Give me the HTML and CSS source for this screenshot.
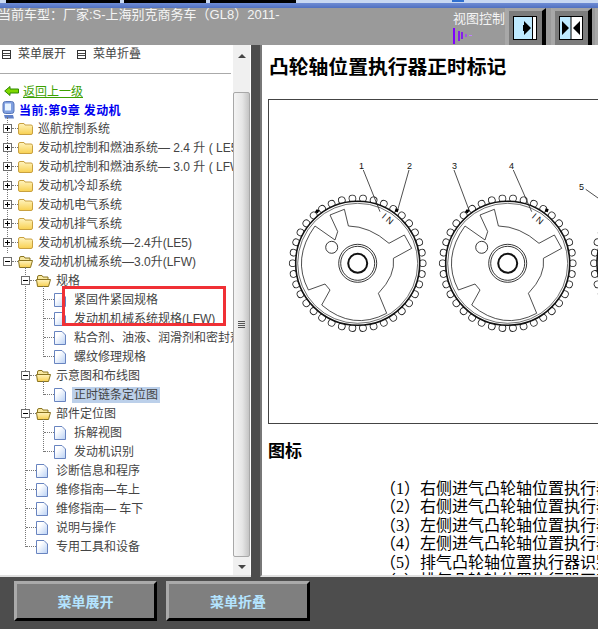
FILE: index.html
```html
<!DOCTYPE html>
<html lang="zh">
<head>
    <meta charset="UTF-8" />
    <title>凸轮轴位置执行器正时标记</title>
    <link rel="stylesheet" href="styles.css">
</head>
<body>
    <svg class="sprite" width="0" height="0">
        <defs>
            <linearGradient id="folderfill" x1="0" y1="0" x2="0" y2="1">
                <stop offset="0" stop-color="#fff4c0" />
                <stop offset="1" stop-color="#f8d050" />
            </linearGradient>
            <linearGradient id="docfill" x1="0" y1="0" x2="1" y2="1">
                <stop offset="0.3" stop-color="#fff" />
                <stop offset="1" stop-color="#b8d0f4" />
            </linearGradient>
            <symbol id="folder" viewBox="0 0 15 13">
                <path d="M.5 3Q.5 1.5 2 1.5H6L7 3H13Q14.5 3 14.5 4.5V11Q14.5 12.5 13 12.5H2Q.5 12.5 .5 11Z" fill="url(#folderfill)" stroke="#c8a040" />
            </symbol>
            <symbol id="folderopen" viewBox="0 0 15 13">
                <path d="M1.5 11V3Q1.5 1.5 3 1.5H6L7 3H12V5" fill="#f8e8a0" stroke="#8a7420" />
                <path d="M1.5 12.5L.5 5.5H14.5L12.5 12.5Z" fill="url(#folderfill)" stroke="#8a7420" />
            </symbol>
            <symbol id="doc" viewBox="0 0 12 14">
                <path d="M.5 .5H8L11.5 4V13.5H.5Z" fill="url(#docfill)" stroke="#6884c0" />
            </symbol>
            <g id="gear">
                <circle r="65" fill="none" stroke="#222" stroke-width="7.6" stroke-linecap="round" pathLength="38" stroke-dasharray="0.001 0.999" />
                <circle r="65" fill="none" stroke="#fff" stroke-width="6" stroke-linecap="round" pathLength="38" stroke-dasharray="0.001 0.999" />
                <circle r="62" fill="#fff" stroke="#111" stroke-width="1.6" />
                <circle r="60" fill="none" stroke="#333" stroke-width=".7" />
                <path d="M-27.7-48.3L-13.3-54-9.3-37.3Q12-37 31.3-20L46.7-28.3 54-15 35.7-5Q38 12 20.7 30L29 50Q-5 68-36 41.7L-27.7 26.7-32.7 20.7-49.3 26.7Q-66-5-42.7-37.3L-22.7-23.3-20-31.7Z" fill="none" stroke="#222" stroke-width=".8" />
                <circle cx="-26" cy="-16" r="6" fill="#fff" stroke="#222" stroke-width=".9" />
                <circle r="19" fill="none" stroke="#222" stroke-width=".9" />
                <circle r="17" fill="none" stroke="#222" stroke-width=".9" />
                <circle r="9.5" fill="none" stroke="#111" stroke-width="2" />
                <path d="M-41-54l3 1-2 3-3-1zM38-55l3 1-1 3-3-1z" fill="#000" />
                <text class="figtext" transform="translate(28 -42) rotate(40)" text-anchor="middle">I N</text>
            </g>
        </defs>
    </svg>

    <div class="topline">
        <div class="taskbtn"></div>
        <div class="taskbtn second"></div>
        <div class="taskbtn third"></div>
        <div class="taskmark"></div>
    </div>

    <header class="topbar">
        <div class="car">当前车型：厂家:S-上海别克商务车（GL8）2011-</div>
        <div class="viewctl">
            <div class="viewlabel">
                <span>视图控制</span>
                <svg class="bars" width="20" height="16" viewBox="0 0 20 16">
                    <path d="M1 0v16" stroke="#8000ff" stroke-width="2" />
                    <path d="M6 3v10M9 4v7" stroke="#8000ff" stroke-width="1.6" />
                    <path d="M13 6v3" stroke="#a040ff" stroke-width="1.5" />
                    <path d="M16 7.5h3" stroke="#c080ff" stroke-width="1" />
                </svg>
            </div>
            <div class="viewbtn">
                <svg class="viewicon" width="24" height="24" viewBox="0 0 24 24">
                    <rect width="24" height="24" fill="#bfeaff" />
                    <rect x="20" y="1" width="3" height="22" fill="#fff" />
                    <rect x=".5" y=".5" width="23" height="23" fill="none" stroke="#000" />
                    <path d="M19.5 0v24" stroke="#000" />
                    <path d="M11 5l7 7-7 7zM10 9h2v6h-2z" fill="#000" />
                </svg>
            </div>
            <div class="viewbtn">
                <svg class="viewicon" width="24" height="24" viewBox="0 0 24 24">
                    <rect width="12" height="24" fill="#bfeaff" />
                    <rect x="12" width="12" height="24" fill="#fff" />
                    <rect x=".5" y=".5" width="23" height="23" fill="none" stroke="#000" />
                    <path d="M12 0v24" stroke="#000" />
                    <path d="M3 5l7 7-7 7zM21 5l-7 7 7 7z" fill="#000" />
                </svg>
            </div>
            <div class="viewbtn cut"></div>
        </div>
    </header>

    <main class="panels">
        <aside class="side">
            <div class="sidescroll">
                <div class="menubar">
                    <span class="menuitem"><i class="menuicon"></i>菜单展开</span>
                    <span class="menuitem"><i class="menuicon"></i>菜单折叠</span>
                </div>
                <a class="back">
                    <svg width="15" height="10" viewBox="0 0 15 10"><path d="M.7 5L6 .5V3H14.5V7H6V9.5Z" fill="#80d800" stroke="#2f8a00" /></svg>
                    <span>返回上一级</span>
                </a>
                <div class="current">
                    <svg width="13" height="18" viewBox="0 0 13 18">
                        <rect x="1" y=".5" width="11" height="12" rx="2.5" fill="#7f9fe0" stroke="#5a78b8" />
                        <rect x="3" y="2.5" width="6" height="7" fill="#e8f4ff" />
                        <path d="M2 14h9l1 3.5H3z" fill="#5f7fc8" />
                    </svg>
                    <b>当前:第9章 发动机</b>
                </div>

                <ul class="tree">
                    <li class="row r0"><i class="exp plus"></i><i class="dash"></i><svg class="ficon"><use href="#folder" /></svg><span class="label">巡航控制系统</span></li>
                    <li class="row r0"><i class="exp plus"></i><i class="dash"></i><svg class="ficon"><use href="#folder" /></svg><span class="label">发动机控制和燃油系统— 2.4 升 ( LE5 )</span></li>
                    <li class="row r0"><i class="exp plus"></i><i class="dash"></i><svg class="ficon"><use href="#folder" /></svg><span class="label">发动机控制和燃油系统— 3.0 升 ( LFW )</span></li>
                    <li class="row r0"><i class="exp plus"></i><i class="dash"></i><svg class="ficon"><use href="#folder" /></svg><span class="label">发动机冷却系统</span></li>
                    <li class="row r0"><i class="exp plus"></i><i class="dash"></i><svg class="ficon"><use href="#folder" /></svg><span class="label">发动机电气系统</span></li>
                    <li class="row r0"><i class="exp plus"></i><i class="dash"></i><svg class="ficon"><use href="#folder" /></svg><span class="label">发动机排气系统</span></li>
                    <li class="row r0"><i class="exp plus"></i><i class="dash"></i><svg class="ficon"><use href="#folder" /></svg><span class="label">发动机机械系统—2.4升(LE5)</span></li>
                    <li class="row r0"><i class="exp"></i><i class="dash"></i><svg class="ficon"><use href="#folderopen" /></svg><span class="label">发动机机械系统—3.0升(LFW)</span></li>
                </ul>
                <ul class="sub lvl1">
                    <li class="row r1"><i class="exp"></i><i class="dash"></i><svg class="ficon"><use href="#folderopen" /></svg><span class="label">规格</span></li>
                    <li>
                        <ul class="sub lvl2">
                            <li class="row d2"><i class="dash"></i><svg class="dicon"><use href="#doc" /></svg><span class="label">紧固件紧固规格</span></li>
                            <li class="row d2"><i class="dash"></i><svg class="dicon"><use href="#doc" /></svg><span class="label">发动机机械系统规格(LFW)</span></li>
                            <li class="row d2"><i class="dash"></i><svg class="dicon"><use href="#doc" /></svg><span class="label">粘合剂、油液、润滑剂和密封剂</span></li>
                            <li class="row d2"><i class="dash"></i><svg class="dicon"><use href="#doc" /></svg><span class="label">螺纹修理规格</span></li>
                        </ul>
                    </li>
                    <li class="row r1"><i class="exp"></i><i class="dash"></i><svg class="ficon"><use href="#folderopen" /></svg><span class="label">示意图和布线图</span></li>
                    <li>
                        <ul class="sub lvl2">
                            <li class="row d2"><i class="dash"></i><svg class="dicon"><use href="#doc" /></svg><span class="label sel">正时链条定位图</span></li>
                        </ul>
                    </li>
                    <li class="row r1"><i class="exp"></i><i class="dash"></i><svg class="ficon"><use href="#folderopen" /></svg><span class="label">部件定位图</span></li>
                    <li>
                        <ul class="sub lvl2">
                            <li class="row d2"><i class="dash"></i><svg class="dicon"><use href="#doc" /></svg><span class="label">拆解视图</span></li>
                            <li class="row d2"><i class="dash"></i><svg class="dicon"><use href="#doc" /></svg><span class="label">发动机识别</span></li>
                        </ul>
                    </li>
                    <li class="row d1"><i class="dash"></i><svg class="dicon"><use href="#doc" /></svg><span class="label">诊断信息和程序</span></li>
                    <li class="row d1"><i class="dash"></i><svg class="dicon"><use href="#doc" /></svg><span class="label">维修指南—车上</span></li>
                    <li class="row d1"><i class="dash"></i><svg class="dicon"><use href="#doc" /></svg><span class="label">维修指南— 车下</span></li>
                    <li class="row d1"><i class="dash"></i><svg class="dicon"><use href="#doc" /></svg><span class="label">说明与操作</span></li>
                    <li class="row d1"><i class="dash"></i><svg class="dicon"><use href="#doc" /></svg><span class="label">专用工具和设备</span></li>
                </ul>
                <div class="redbox"></div>
            </div>
            <div class="scrollbar">
                <div class="arrow"><span class="up"></span></div>
                <div class="track">
                    <div class="thumb"><div class="grip"></div></div>
                </div>
                <div class="arrow"><span class="down"></span></div>
            </div>
        </aside>

        <section class="content">
            <h1>凸轮轴位置执行器正时标记</h1>
            <div class="figure">
                <svg width="400" height="323" viewBox="0 0 400 323">
                    <use href="#gear" transform="translate(88.7 163.3)" />
                    <use href="#gear" transform="translate(238.7 163.3)" />
                    <use href="#gear" transform="translate(390 163.3)" />
                    <g fill="none" stroke="#222" stroke-width=".8">
                        <path d="M94.3 70L111 111.7" />
                        <path d="M140 70L128.7 110" />
                        <path d="M185 70L200 110" />
                        <path d="M244.3 70L262.7 111.7" />
                        <path d="M316.7 89.3L329 98" />
                    </g>
                    <text class="figtext" x="90" y="69">1</text>
                    <text class="figtext" x="138" y="69">2</text>
                    <text class="figtext" x="183" y="69">3</text>
                    <text class="figtext" x="240" y="69">4</text>
                    <text class="figtext" x="310" y="90">5</text>
                </svg>
            </div>
            <h2>图标</h2>
            <ol class="legend">
                <li>（1）右侧进气凸轮轴位置执行器识别标记</li>
                <li>（2）右侧进气凸轮轴位置执行器正时标记</li>
                <li>（3）左侧进气凸轮轴位置执行器识别标记</li>
                <li>（4）左侧进气凸轮轴位置执行器正时标记</li>
                <li>（5）排气凸轮轴位置执行器识别标记</li>
                <li>（6）排气凸轮轴位置执行器正时标记</li>
            </ol>
        </section>
    </main>

    <footer class="bottom">
        <button class="bigbtn">菜单展开</button>
        <button class="bigbtn wide">菜单折叠</button>
    </footer>
</body>
</html>
```

FILE: styles.css
```css
html, body {
    margin: 0;
    height: 100%;
    overflow: hidden;
}

body {
    width: 598px;
    height: 631px;
    padding-bottom: 2px;
    box-sizing: border-box;
    background-color: #fff;
    font-family: "Liberation Sans", "Noto Sans CJK SC", sans-serif;
    font-size: 12px;
    color: #333;
    display: flex;
    flex-direction: column;
}

.sprite {
    position: absolute;
}

/* window strip */
.topline {
    height: 8px;
    flex: none;
    display: flex;
    background: linear-gradient(#c8d8f2 0 3px, #6e8cd4 3px, #5070c0 8px);
    position: relative;
}

.taskbtn {
    width: 114px;
    height: 3px;
    margin-left: 6px;
    background-color: #000;
}

.taskbtn.second {
    width: 82px;
    margin-left: 4px;
}

.taskbtn.third {
    width: 86px;
    margin-left: 4px;
}

.taskmark {
    position: absolute;
    left: 452px;
    top: 0;
    width: 12px;
    height: 2px;
    background-color: #2f6fd0;
}

/* top bar */
.topbar {
    height: 37px;
    flex: none;
    background-color: #9a9a9a;
    display: flex;
    justify-content: space-between;
    color: #f4f4f4;
}

.car {
    font-size: 13px;
    line-height: 14px;
    white-space: nowrap;
    margin-left: -2px;
}

.viewctl {
    width: 145px;
    flex: none;
    display: flex;
}

.viewlabel {
    width: 52px;
    flex: none;
    padding-top: 3px;
    font-size: 13px;
    line-height: 16px;
    white-space: nowrap;
}

.bars {
    display: block;
    margin-top: 1px;
}

.viewbtn {
    width: 41px;
    height: 37px;
    flex: none;
    padding-top: 5px;
    padding-left: 4px;
    box-sizing: border-box;
    margin-right: 5px;
    background-color: #7c7c7c;
    border-style: solid;
    border-width: 3px 4px 0 4px;
    border-color: #a4a4a4 #000 #000 #a8a8a8;
}

.viewbtn.cut {
    width: 3px;
    margin-left: -2px;
    margin-right: 0;
    padding: 0;
    border-width: 3px 0 0 3px;
}

.viewicon {
    display: block;
}

/* main panels */
.panels {
    flex: 1;
    min-height: 0;
    display: flex;
    background-color: #4d4d4d;
}

.side {
    width: 251px;
    flex: none;
    display: flex;
    background-color: #fff;
    border-bottom: 2px solid #e0e0e0;
}

.sidescroll {
    width: 233px;
    flex: none;
    position: relative;
    overflow: hidden;
}

.menubar {
    height: 29px;
    margin-right: 2px;
    border-bottom: 1px solid #aaa;
    display: flex;
    align-items: flex-start;
    gap: 11px;
    padding-left: 2px;
    box-sizing: border-box;
    white-space: nowrap;
}

.menuitem {
    display: flex;
    align-items: center;
    height: 14px;
    color: #444;
}

.menuicon {
    width: 7px;
    height: 5px;
    margin-top: 5px;
    margin-right: 7px;
    padding: 1px 0;
    border: 1px solid #333;
    background: repeating-linear-gradient(#444 0 1px, #fff 1px 2px);
    background-clip: content-box;
}

.back {
    display: flex;
    align-items: center;
    gap: 4px;
    height: 19px;
    margin-top: 7px;
    padding-left: 4px;
    color: #3ca000;
    text-decoration: underline;
}

.current {
    display: flex;
    align-items: center;
    height: 19px;
    padding-left: 2px;
    gap: 4px;
    color: #0000f0;
    white-space: nowrap;
    letter-spacing: .4px;
}

/* tree */
.tree, .sub {
    list-style: none;
    margin: 0;
    padding: 0;
    position: relative;
}

.tree::before, .sub::before {
    content: "";
    position: absolute;
    border-left: 1px dotted #777;
}

.tree::before {
    left: 7px;
    top: -2px;
    height: 136px;
}

.sub::before {
    top: -4px;
    bottom: 9px;
}

.lvl1::before {
    left: 25px;
}

.lvl2::before {
    left: 43px;
}

.row {
    height: 19px;
    display: flex;
    align-items: center;
    white-space: nowrap;
    color: #444;
}

.r0 {
    padding-left: 3px;
}

.r1 {
    padding-left: 21px;
}

.d1 {
    padding-left: 26px;
}

.d2 {
    padding-left: 44px;
}

.exp {
    width: 7px;
    height: 7px;
    flex: none;
    border: 1px solid #6e6e6e;
    background: linear-gradient(#000, #000) center / 5px 1px no-repeat #fff;
    position: relative;
    z-index: 1;
}

.exp.plus {
    background: linear-gradient(#000, #000) center / 5px 1px no-repeat, linear-gradient(#000, #000) center / 1px 5px no-repeat, #fff;
}

.dash {
    width: 6px;
    flex: none;
    border-top: 1px dotted #777;
}

.d1 .dash, .d2 .dash {
    width: 10px;
}

.ficon {
    width: 15px;
    height: 13px;
    flex: none;
    margin-right: 3px;
}

.dicon {
    width: 12px;
    height: 14px;
    flex: none;
    margin-right: 6px;
}

.label {
    line-height: 16px;
    padding: 0 2px;
}

.sel {
    background-color: #bcd0ea;
}

.redbox {
    position: absolute;
    left: 62px;
    top: 241px;
    width: 164px;
    height: 40px;
    box-sizing: border-box;
    border: 3px solid #f03035;
}

/* scrollbar */
.scrollbar {
    width: 17px;
    flex: none;
    background-color: #f0f0f0;
    display: flex;
    flex-direction: column;
}

.arrow {
    height: 17px;
    flex: none;
    position: relative;
}

.arrow span {
    position: absolute;
    left: 5px;
    width: 0;
    height: 0;
    border: 4px solid transparent;
}

.arrow .up {
    top: 5px;
    border-bottom-color: #444;
}

.arrow .down {
    top: 7px;
    border-top-color: #444;
}

.track {
    flex: 1;
    min-height: 0;
    padding-top: 30px;
    padding-bottom: 1px;
    display: flex;
}

.thumb {
    flex: 1;
    border: 1px solid #a8a8a8;
    border-radius: 2px;
    background: linear-gradient(to right, #f4f4f4, #e6e6e6 55%, #c4c4c4);
    display: flex;
    align-items: center;
    justify-content: center;
}

.grip {
    width: 7px;
    height: 7px;
    background: repeating-linear-gradient(#555 0 1px, transparent 1px 2px);
}

/* article */
.content {
    flex: 1;
    min-width: 0;
    margin-left: 9px;
    background-color: #fff;
    border-left: 2px solid #777;
    border-bottom: 2px solid #e0e0e0;
    padding-left: 6px;
    overflow: hidden;
    font-family: "Liberation Serif", "Noto Sans CJK SC", serif;
    color: #000;
}

.content h1 {
    font-size: 19.8px;
    line-height: 24px;
    margin: 10px 0 20px 1px;
    white-space: nowrap;
}

.figure {
    width: 330px;
    height: 325px;
    border: 1px solid #444;
    border-right: 0;
    box-sizing: border-box;
    overflow: hidden;
}

.figure svg {
    display: block;
}

.figtext {
    font-family: "Liberation Sans", sans-serif;
    font-size: 9px;
    fill: #111;
}

.content h2 {
    font-size: 17px;
    line-height: 20px;
    margin: 18px 0 17.5px;
}

.legend {
    list-style: none;
    margin: 0 0 0 112px;
    padding: 0;
    font-size: 16px;
    line-height: 18.5px;
    white-space: nowrap;
}

/* bottom buttons */
.bottom {
    height: 52px;
    flex: none;
    background-color: #4d4d4d;
    display: flex;
    gap: 9px;
    padding: 4px 0 0 14px;
    box-sizing: border-box;
}

.bigbtn {
    width: 143px;
    height: 40px;
    background-color: #7f7f7f;
    border: 3px solid;
    border-color: #aaa #000 #000 #aaa;
    color: #b4e4ff;
    font-family: inherit;
    font-size: 14px;
    font-weight: bold;
}

.bigbtn.wide {
    width: 144px;
}
```
